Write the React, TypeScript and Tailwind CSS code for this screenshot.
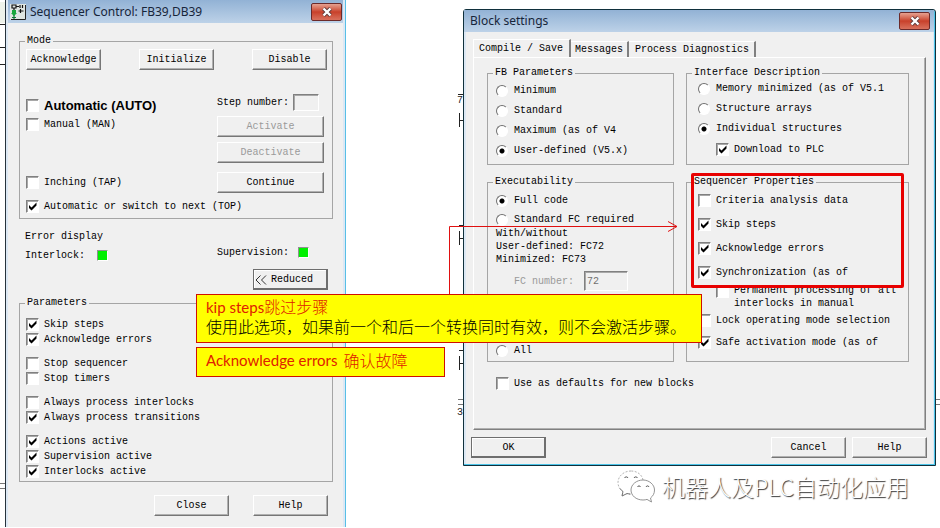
import { ReactNode } from "react";
import clsx from "clsx";

type OptionProps = {
  label: string;
  checked?: boolean;
  className?: string;
  labelClassName?: string;
};

const sunken =
  "border border-t-[#808080] border-l-[#808080] border-r-white border-b-white shadow-[inset_1px_1px_0_#a8a8a8]";

function CheckOption({ label, checked, className, labelClassName }: OptionProps) {
  return (
    <label className={clsx("flex min-h-[15px] items-start gap-[5px] whitespace-nowrap", className)}>
      <span className="mt-px grid size-[13px] shrink-0">
        <input
          type="checkbox"
          defaultChecked={checked}
          className={clsx("peer col-start-1 row-start-1 size-[13px] appearance-none bg-white", sunken)}
        />
        <svg
          viewBox="0 0 13 13"
          className="pointer-events-none col-start-1 row-start-1 hidden size-[13px] peer-checked:block"
        >
          <path d="M3 5v3l2.5 2.5L10.500 5.500V2.500L5.500 7.500z" fill="#000" />
        </svg>
      </span>
      <span className={clsx(labelClassName ?? "leading-[15px]")}>{label}</span>
    </label>
  );
}

function RadioOption({ label, checked, name }: OptionProps & { name: string }) {
  return (
    <label className="flex h-[15px] items-center gap-[5px] whitespace-nowrap">
      <input
        type="radio"
        name={name}
        defaultChecked={checked}
        className="mr-px size-[12px] shrink-0 appearance-none rounded-full border border-t-[#707070] border-r-white border-b-white border-l-[#707070] bg-white checked:bg-[radial-gradient(circle,#000_2px,#fff_3px)]"
      />
      <span>{label}</span>
    </label>
  );
}

function Group({
  title,
  className,
  children,
}: {
  title: string;
  className?: string;
  children: ReactNode;
}) {
  return (
    <fieldset className={clsx("min-w-0 border border-[#a5a5a5] px-[5px]", className)}>
      <legend className="h-3 px-[2px] leading-3">{title}</legend>
      {children}
    </fieldset>
  );
}

function PushButton({
  children,
  variant = "normal",
  disabled,
  wide,
}: {
  children: ReactNode;
  variant?: "normal" | "default";
  disabled?: boolean;
  wide?: boolean;
}) {
  return (
    <button
      type="button"
      disabled={disabled}
      className={clsx(
        "h-[21px] shrink-0 whitespace-nowrap border bg-[#f0f0f0] text-center leading-[18px] disabled:text-[#9a9a9a]",
        wide ? "w-full" : "w-[75px]",
        variant === "default"
          ? "border-[#6e6e6e] shadow-[inset_-1px_-1px_0_#6e6e6e,inset_1px_1px_0_#fff]"
          : "border-t-white border-l-white border-r-[#767676] border-b-[#767676] shadow-[inset_-1px_-1px_0_#b0b0b0]"
      )}
    >
      {children}
    </button>
  );
}

function CloseButton() {
  return (
    <button
      type="button"
      aria-label="Close"
      className="flex h-[18px] w-[31px] items-center justify-center rounded-[2px] border border-[#6b2a2a] bg-linear-to-b from-[#e5a090] via-[#c8402a] via-50% to-[#d8705c]"
    >
      <svg viewBox="0 0 12 10" className="h-[10px] w-[12px]">
        <path d="M2.500 1.500l7 7M9.500 1.500l-7 7" stroke="#5c3a3a" strokeWidth="4" />
        <path d="M2.500 1.500l7 7M9.500 1.500l-7 7" stroke="#fff" strokeWidth="2.400" />
      </svg>
    </button>
  );
}

function SequencerIcon() {
  return (
    <svg viewBox="0 0 16 16" className="size-4">
      <rect width="16" height="16" fill="#dfe6e2" />
      <path d="M15.500 1v14.500H1" fill="none" stroke="#222" />
      <path d="M2 1h4v3H2zM4 4v3M6 2.500h3M10 1v3M12.500 1v3M10.500 5v4M8.500 7h5" fill="none" stroke="#111" strokeWidth="1.200" />
      <path d="M2 6h4v3h1l-3 3-3-3h1z" fill="#18a83c" />
      <path d="M4 11v4M2 13.500h4" stroke="#0c7a32" strokeWidth="1.200" />
    </svg>
  );
}

function TitleBar({ title, icon, className }: { title: string; icon?: ReactNode; className: string }) {
  return (
    <header
      className={clsx(
        "flex items-center bg-linear-to-b from-[#92b2d5] to-[#bdd2e8] font-['Noto_Sans','Open_Sans',sans-serif] text-[12px] text-[#17253a]",
        className
      )}
    >
      {icon}
      <h1 className="flex-1 truncate">{title}</h1>
      <CloseButton />
    </header>
  );
}

function StatusLamp() {
  return (
    <span className="size-[11px] border border-t-[#909090] border-l-[#909090] border-r-white border-b-white bg-[#00f000]" />
  );
}

function SequencerControl() {
  return (
    <section className="min-w-0 border-r border-l border-l-[#26323c] border-r-[#58bfe6] bg-[#dce8f4] px-[2px]">
      <TitleBar
        title="Sequencer Control: FB39,DB39"
        icon={<SequencerIcon />}
        className="h-[23px] gap-1 pr-px pl-[2px]"
      />
      <div className="bg-[#f0f0f0] pt-3 pr-[10px] pb-[11px] pl-[11px]">
        <Group title="Mode" className="pb-1">
          <div className="flex justify-between pt-[2px] pl-px">
            <PushButton>Acknowledge</PushButton>
            <PushButton>Initialize</PushButton>
            <PushButton>Disable</PushButton>
          </div>
          <div className="mt-6 flex justify-between pr-[3px] pl-px">
            <div className="pt-1">
              <CheckOption
                label="Automatic (AUTO)"
                labelClassName="font-['Liberation_Sans',Arial,sans-serif] text-[13px] font-bold leading-[15px]"
              />
              <CheckOption label="Manual (MAN)" className="mt-1" />
              <CheckOption label="Inching (TAP)" className="mt-[43px]" />
            </div>
            <div className="w-[107px]">
              <div className="flex h-[17px] items-center gap-1">
                <label htmlFor="step" className="whitespace-nowrap">
                  Step number:
                </label>
                <input id="step" className={clsx("h-[17px] w-[26px] bg-[#f0f0f0] px-1", sunken)} />
              </div>
              <div className="mt-[5px] flex flex-col gap-[5px]">
                <PushButton wide disabled>
                  Activate
                </PushButton>
                <PushButton wide disabled>
                  Deactivate
                </PushButton>
              </div>
              <div className="mt-[9px]">
                <PushButton wide>Continue</PushButton>
              </div>
            </div>
          </div>
          <CheckOption
            label="Automatic or switch to next (TOP)"
            checked
            className="mt-[6px] pl-px"
          />
        </Group>

        <div className="mt-[10px] pr-[5px] pl-[6px]">
          <h2 className="leading-[15px]">Error display</h2>
          <div className="mt-px flex h-[18px] justify-between">
            <div className="flex h-[15px] items-center gap-3 self-end">
              <span>Interlock:</span>
              <StatusLamp />
            </div>
            <div className="flex h-[15px] w-[111px] items-center gap-[9px]">
              <span>Supervision:</span>
              <StatusLamp />
            </div>
          </div>
          <div className="mt-[6px] flex justify-end">
            <PushButton variant="default">
              <span className="flex items-center gap-1 pl-px">
                <svg viewBox="0 0 12 10" className="h-[10px] w-3">
                  <path d="M5.500 0.500L1 5l4.500 4.500M11 0.500L6.500 5l4.500 4.500" fill="none" stroke="#333" />
                </svg>
                Reduced
              </span>
            </PushButton>
          </div>
        </div>

        <Group title="Parameters" className="mt-[7px] pb-[2px]">
          <div className="flex flex-col gap-[9px] pt-2 pl-px">
            <div>
              <CheckOption label="Skip steps" checked />
              <CheckOption label="Acknowledge errors" checked />
            </div>
            <div>
              <CheckOption label="Stop sequencer" />
              <CheckOption label="Stop timers" />
            </div>
            <div>
              <CheckOption label="Always process interlocks" />
              <CheckOption label="Always process transitions" checked />
            </div>
            <div>
              <CheckOption label="Actions active" checked />
              <CheckOption label="Supervision active" checked />
              <CheckOption label="Interlocks active" checked />
            </div>
          </div>
        </Group>

        <div className="mt-[13px] flex justify-end gap-6 pr-[5px]">
          <PushButton>Close</PushButton>
          <PushButton>Help</PushButton>
        </div>
      </div>
    </section>
  );
}

function BlockSettings() {
  return (
    <section className="mt-[9px] min-w-0 rounded-t-[3px] border border-[#10303c] bg-[#dce8f4] shadow-[inset_-1px_-1px_0_#4cc4e8]">
      <TitleBar title="Block settings" className="mr-px h-[22px] pr-1 pl-[6px]" />
      <div className="mr-[2px] mb-px ml-[2px] bg-[#f0f0f0] pt-[7px] pr-[6px] pb-[6px] pl-[5px]">
        <div className="ml-[2px] flex items-end" role="tablist">
          <button
            type="button"
            role="tab"
            aria-selected="true"
            className="h-[18px] w-[98px] border-t border-r-2 border-l border-t-white border-r-[#808080] border-l-white pl-[5px] text-left whitespace-nowrap"
          >
            Compile / Save
          </button>
          <button
            type="button"
            role="tab"
            className="h-4 w-[58px] border-t border-r-2 border-t-white border-r-[#808080] pl-1 text-left whitespace-nowrap"
          >
            Messages
          </button>
          <button
            type="button"
            role="tab"
            className="h-4 w-[127px] border-t border-r-2 border-t-white border-r-[#808080] pl-[6px] text-left whitespace-nowrap"
          >
            Process Diagnostics
          </button>
        </div>

        <div className="mr-px ml-[2px] border border-t-white border-l-white border-r-[#808080] border-b-[#808080] pt-[9px] pr-4 pb-[38px] pl-[13px] shadow-[inset_-1px_-1px_0_#b0b0b0]">
          <div className="grid grid-cols-[187fr_223fr] gap-x-3 gap-y-[11px]">
            <Group title="FB Parameters" className="pb-[6px]">
              <div className="flex flex-col gap-[5px] pt-1 pl-[3px]">
                <RadioOption name="fb" label="Minimum" />
                <RadioOption name="fb" label="Standard" />
                <RadioOption name="fb" label="Maximum (as of V4" />
                <RadioOption name="fb" label="User-defined (V5.x)" checked />
              </div>
            </Group>

            <Group title="Interface Description">
              <div className="flex flex-col gap-[5px] pt-[2px] pl-[6px]">
                <RadioOption name="interface" label="Memory minimized (as of V5.1" />
                <RadioOption name="interface" label="Structure arrays" />
                <RadioOption name="interface" label="Individual structures" checked />
                <CheckOption label="Download to PLC" checked className="pt-px pl-[18px]" />
              </div>
            </Group>

            <Group title="Executability" className="pb-[3px]">
              <div className="pt-[5px] pl-[3px]">
                <div className="flex flex-col gap-1">
                  <RadioOption name="exec" label="Full code" checked />
                  <RadioOption name="exec" label="Standard FC required" />
                </div>
                <p className="leading-[13px] whitespace-nowrap">
                  With/without
                  <br />
                  User-defined: FC72
                  <br />
                  Minimized: FC73
                </p>
                <div className="mt-[5px] flex h-5 items-center gap-[10px] pl-[18px] text-[#9a9a9a]">
                  <label htmlFor="fc">FC number:</label>
                  <input
                    id="fc"
                    disabled
                    defaultValue="72"
                    className={clsx("h-5 w-11 bg-[#f0f0f0] px-[2px] text-[#707070]", sunken)}
                  />
                </div>
                <div className="mt-[52px]">
                  <RadioOption name="memory" label="All" />
                </div>
              </div>
            </Group>

            <div className="relative grid">
              <Group title="Sequencer Properties">
                <div className="pt-[5px] pl-[6px]">
                  <div className="flex flex-col gap-[9px]">
                    <CheckOption label="Criteria analysis data" />
                    <CheckOption label="Skip steps" checked />
                    <CheckOption label="Acknowledge errors" checked />
                    <CheckOption label="Synchronization (as of" checked />
                  </div>
                  <CheckOption
                    label={"Permanent processing of all\ninterlocks in manual"}
                    className="mt-1 pl-[18px]"
                    labelClassName="whitespace-pre leading-[13px]"
                  />
                  <CheckOption label="Lock operating mode selection" className="mt-[3px]" />
                  <CheckOption label="Safe activation mode (as of" checked className="mt-[7px]" />
                </div>
              </Group>
              <div className="pointer-events-none absolute inset-x-[5px] -top-[3px] h-[115px] rounded-[2px] border-3 border-[#e80000]" />
            </div>
          </div>
          <CheckOption label="Use as defaults for new blocks" className="mt-[14px] pl-[9px]" />
        </div>

        <div className="mt-[7px] flex gap-[6px]">
          <PushButton variant="default">OK</PushButton>
          <div className="flex-1" />
          <PushButton>Cancel</PushButton>
          <PushButton>Help</PushButton>
        </div>
      </div>
    </section>
  );
}

// Bits of the ladder diagram that stay visible behind the windows
function DiagramRemnants() {
  return (
    <svg
      viewBox="0 0 940 528"
      className="pointer-events-none absolute top-0 left-0 h-[528px] w-[940px]"
      fill="none"
      stroke="#222"
      shapeRendering="crispEdges"
    >
      <rect x="0" y="2" width="5" height="21" fill="#eef2ea" stroke="none" />
      <path d="M0 24.500h5M0 47.500h5M0 64.500h5" />
      <path d="M0 483.500h6M0 488.500h6M458 399.500h5M458 404.500h5M936 399.500h4M936 404.500h4" stroke="#777" />
      <path d="M458 94.500h5M459.500 113v14M459 120.500h4" />
      <path d="M459 225.500h4M459.500 231v14M459 238.500h4" />
      <path d="M459 350.500h4M459.500 356v14M459 363.500h4" />
      <text x="457" y="103" fontSize="10" fill="#222" stroke="none">
        7
      </text>
      <text x="457" y="415" fontSize="10" fill="#222" stroke="none">
        3
      </text>
    </svg>
  );
}

function Watermark() {
  return (
    <div className="absolute top-[469px] left-[617px] flex items-center gap-[7px]">
      <svg viewBox="0 0 38 34" className="h-[34px] w-[38px]" fill="#fff" strokeWidth="0.900">
        <path
          d="M14 2C7 2 1 7 1 13.500c0 4 2 7 5 9L5 27l5-2.500c2 .6 4 .8 6 .5M26 11C25 5.500 20 2 14 2"
          stroke="#aaa"
          strokeDasharray="2 1.500"
        />
        <path d="M3 19.500c1 1.500 2 2.300 3 3L5 27l5-2.500 3 .6" stroke="#666" />
        <path
          d="M26 11c-6.500 0-12 4.500-12 10s5 10 12 10c1.500 0 3-.2 4-.6l4.500 2.600-1-4c2.500-2 4-4.500 4-8C37.500 15.500 32 11 26 11z"
          stroke="#888"
        />
        <path
          d="M7.500 9c.5-1.500 3-1.500 3.500 0M17 9c.5-1.500 3-1.500 3.500 0M20.500 18c.5-1.500 2.500-1.500 3 0M29 18c.5-1.500 2.500-1.500 3 0"
          stroke="#444"
        />
      </svg>
      <span className="font-['Noto_Sans_CJK_SC',sans-serif] text-[23px] leading-[34px] font-light whitespace-nowrap text-white [text-shadow:1px_1px_1px_#333]">
        机器人及PLC自动化应用
      </span>
    </div>
  );
}

function Callouts() {
  return (
    <>
      <svg
        viewBox="0 0 230 75"
        className="pointer-events-none absolute top-[219px] left-[448px] h-[75px] w-[230px]"
        fill="none"
        stroke="#e01010"
      >
        <path d="M1.500 75V7.500H229M220 2.500l9 5-9 5" />
      </svg>
      <div className="absolute top-[294px] left-[196px] h-[49px] w-[506px] border border-[#d01000] bg-[#ffff00] px-[9px] pt-[2px] font-light whitespace-nowrap">
        <p className="leading-[19px] text-[#e02000]">
          <span className="text-[15px] font-normal">kip steps</span>跳过步骤
        </p>
        <p className="leading-[19px] text-black">
          使用此选项，如果前一个和后一个转换同时有效，则不会激活步骤。
        </p>
      </div>
      <div className="absolute top-[347px] left-[196px] flex h-[30px] w-[249px] items-center gap-[6px] border border-[#d01000] bg-[#ffff00] px-[9px] pb-[3px] font-light whitespace-nowrap text-[#e02000]">
        <span className="text-[15px] font-normal">Acknowledge errors</span>
        <span>确认故障</span>
      </div>
    </>
  );
}

export default function App() {
  return (
    <main className="relative min-h-screen overflow-hidden bg-white font-['Liberation_Mono','Noto_Sans_CJK_SC',monospace] text-[10px] text-black">
      <DiagramRemnants />
      <div className="relative grid grid-cols-[341fr_473fr] items-start gap-x-[117px] pr-1 pl-[5px]">
        <SequencerControl />
        <BlockSettings />
      </div>
      <div className="font-['Lato','Noto_Sans_CJK_SC',sans-serif] text-[16px]">
        <Callouts />
      </div>
      <Watermark />
    </main>
  );
}
